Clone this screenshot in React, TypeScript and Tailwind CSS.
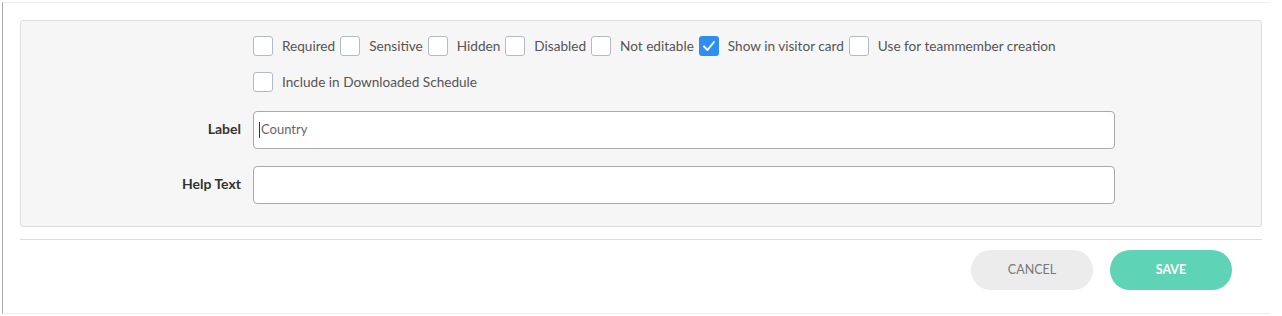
import React from "react";

const boxes: { label: string; checked?: boolean }[] = [
  { label: "Required" },
  { label: "Sensitive" },
  { label: "Hidden" },
  { label: "Disabled" },
  { label: "Not editable" },
  { label: "Show in visitor card", checked: true },
  { label: "Use for teammember creation" },
];

function Box({ label, checked }: { label: string; checked?: boolean }) {
  return (
    <div className="flex items-center mr-[5px]">
      {checked ? (
        <div className="w-[20px] h-[20px] rounded-[3px] bg-[#2f8ff0] flex items-center justify-center">
          <svg width="16" height="16" viewBox="0 0 16 16" fill="none">
            <path d="M3 8.5 L6.5 12 L13 4" stroke="white" strokeWidth="1.9" strokeLinecap="round" strokeLinejoin="round" />
          </svg>
        </div>
      ) : (
        <div className="w-[20px] h-[20px] rounded-[3px] border border-[#b3bac2] bg-white" />
      )}
      <span className="ml-[9px] text-[13.6px] text-[#555] leading-[20px]">{label}</span>
    </div>
  );
}

export default function App() {
  return (
    <div className="w-[1282px] h-[316px] bg-white" style={{ fontFamily: "Lato, 'Open Sans', sans-serif" }}>
      <div className="ml-[2px] mt-[2px] w-[1268px] h-[312px] border-l border-l-[#a8a8a8] border-t border-t-[#eeeeee] border-b border-b-[#eeeeee] pl-[17px] pt-[17px]">
        <div className="w-[1242px] h-[207px] bg-[#f6f6f6] border border-[#dddddd] rounded-[3px] pt-[15px]">
          <div className="flex">
            <div className="w-[221px] shrink-0" />
            <div className="ml-[11px] flex flex-col">
              <div className="flex flex-wrap w-[861px]">
                {boxes.map((b) => (
                  <Box key={b.label} label={b.label} checked={b.checked} />
                ))}
              </div>
              <div className="flex mt-[16px]">
                <Box label="Include in Downloaded Schedule" />
              </div>
            </div>
          </div>
          <div className="flex items-center mt-[19px]">
            <div className="w-[220px] shrink-0 text-right text-[14px] font-bold text-[#333] pb-[4px]">Label</div>
            <div className="ml-[12px] w-[862px] h-[38px] bg-white border border-[#aaaaaa] rounded-[4px] flex items-center pl-[5px]">
              <span className="w-px h-[16px] bg-[#333] mr-[1px]" />
              <span className="text-[13px] text-[#666]">Country</span>
            </div>
          </div>
          <div className="flex items-center mt-[17px]">
            <div className="w-[220px] shrink-0 text-right text-[14px] font-bold text-[#333] pb-[4px]">Help Text</div>
            <div className="ml-[12px] w-[862px] h-[38px] bg-white border border-[#aaaaaa] rounded-[4px]" />
          </div>
        </div>
        <div className="w-[1242px] h-px bg-[#dddddd] mt-[12px]" />
        <div className="w-[1242px] flex justify-end gap-[17px] pr-[30px] mt-[10px]">
          <button className="w-[122px] h-[40px] rounded-full bg-[#ececec] text-[12.5px] text-[#777] uppercase">Cancel</button>
          <button className="w-[122px] h-[40px] rounded-full bg-[#5fd3b5] text-[12.5px] font-bold text-white uppercase">Save</button>
        </div>
      </div>
    </div>
  );
}
